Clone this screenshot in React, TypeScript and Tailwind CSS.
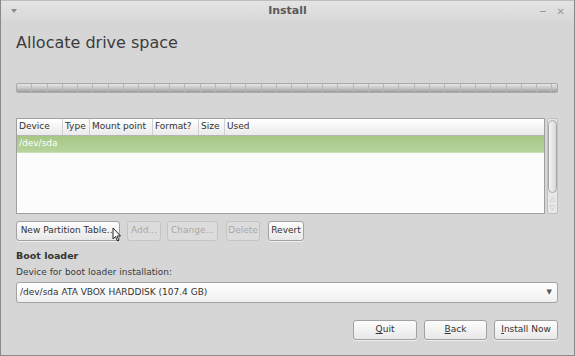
import React from 'react';

const font = { fontFamily: '"DejaVu Sans", sans-serif' };

const columns = [
    { label: 'Device', w: 'w-[46px]' },
    { label: 'Type', w: 'w-[27px]' },
    { label: 'Mount point', w: 'w-[63px]' },
    { label: 'Format?', w: 'w-[46px]' },
    { label: 'Size', w: 'w-[26px]' },
    { label: 'Used', w: 'flex-1' },
];

const ticks = Array.from({ length: 36 });

function Btn({ children, disabled, w }: { children: React.ReactNode; disabled?: boolean; w: string }) {
    return (
        <div
            className={`${w} h-[20px] shrink-0 flex items-center justify-center rounded-[3px] border text-[9px] ${
                disabled
                    ? 'border-[#c4c4c4] bg-[#dcdcdc] text-[#a8a8a8]'
                    : 'border-[#a2a2a2] bg-gradient-to-b from-[#fdfdfd] to-[#e8e8e8] text-[#333] shadow-[0_1px_0_#eee]'
            }`}
        >
            {children}
        </div>
    );
}

export default function App() {
    return (
        <div style={font} className="w-[575px] h-[356px] bg-[#d6d6d6] border-x border-b border-[#8a8a8a] flex flex-col overflow-hidden">
            {/* title bar */}
            <div className="h-[21px] relative flex items-center justify-center bg-gradient-to-b from-[#e4e4e4] to-[#d8d8d8] border-t border-[#bdbdbd]">
                <span className="text-[11px] font-bold text-[#5a5a5a]">Install</span>
                <div className="absolute left-[10px] top-[8px] w-0 h-0 border-l-[3px] border-r-[3px] border-t-[4px] border-l-transparent border-r-transparent border-t-[#8a8a8a]" />
                <div className="absolute right-[28px] top-[10px] w-[6px] h-[1px] bg-[#999]" />
                <span className="absolute right-[9px] top-[3px] text-[10px] text-[#9a9a9a]">✕</span>
            </div>

            <div className="flex flex-col pl-[15px] pr-[16px]">
                <h1 className="mt-[12px] h-[20px] text-[16px] leading-[20px] text-[#3c3c3c]">Allocate drive space</h1>

                {/* partition bar */}
                <div className="mt-[30px] h-[10px] flex rounded-[2px] border border-[#aaa] bg-gradient-to-b from-[#e6e6e6] via-[#c8c8c8] to-[#9e9e9e] overflow-hidden">
                    {ticks.map((_, i) => (
                        <div key={i} className="w-[15.3px] shrink-0 border-r border-[#b8b8b8]" />
                    ))}
                </div>

                {/* partition list */}
                <div className="mt-[25px] h-[96px] flex gap-[2px]">
                    <div className="flex-1 flex flex-col bg-white border border-[#a0a0a0]">
                        <div className="h-[17px] flex text-[9px] text-[#333] bg-gradient-to-b from-white to-[#eaeaea] border-b border-[#b5b5b5]">
                            {columns.map((c) => (
                                <div key={c.label} className={`${c.w} shrink-0 px-[2px] flex items-center border-r border-[#d0d0d0] last:border-r-0`}>
                                    {c.label}
                                </div>
                            ))}
                        </div>
                        <div className="h-[17px] flex items-center px-[2px] text-[9px] text-white bg-gradient-to-b from-[#a7c785] to-[#b6d49c] border-b border-[#c9dfb6]">
                            /dev/sda
                        </div>
                        <div className="flex-1 bg-[#fcfcfc]" />
                    </div>
                    <div className="w-[11px] flex flex-col items-center bg-[#e8e8e8] border border-[#c0c0c0] rounded-[2px]">
                        <div className="w-[9px] h-[73px] mt-[1px] rounded-[5px] border border-[#a8a8a8] bg-gradient-to-r from-[#f4f4f4] to-[#d8d8d8]" />
                        <span className="mt-[2px] text-[7px] leading-[9px] text-[#bbb]">△</span>
                        <span className="text-[7px] leading-[9px] text-[#bbb]">▽</span>
                    </div>
                </div>

                {/* action buttons */}
                <div className="mt-[7px] flex relative">
                    <Btn w="w-[104px]">New Partition Table...</Btn>
                    <div className="ml-[7px]"><Btn w="w-[34px]" disabled>Add...</Btn></div>
                    <div className="ml-[6px]"><Btn w="w-[51px]" disabled>Change...</Btn></div>
                    <div className="ml-[8px]"><Btn w="w-[34px]" disabled>Delete</Btn></div>
                    <div className="ml-[8px]"><Btn w="w-[36px]">Revert</Btn></div>
                    <svg className="absolute left-[96px] top-[6px]" width="10" height="15" viewBox="0 0 10 15">
                        <path d="M1 1 L1 12 L3.5 9.5 L5.5 14 L7 13.3 L5 9 L8.5 9 Z" fill="#fff" stroke="#222" strokeWidth="1" strokeLinejoin="round" />
                    </svg>
                </div>

                <div className="mt-[9px] text-[9.5px] font-bold text-[#333] leading-[12px]">Boot loader</div>
                <div className="mt-[4px] text-[9px] text-[#3a3a3a] leading-[12px]">Device for boot loader installation:</div>

                <div className="mt-[4px] h-[21px] flex items-center justify-between px-[3px] rounded-[3px] border border-[#a2a2a2] bg-gradient-to-b from-white to-[#f0f0f0] text-[9px] text-[#333]">
                    <span>/dev/sda ATA VBOX HARDDISK (107.4 GB)</span>
                    <span className="text-[7px] text-[#555] mr-[2px]">▼</span>
                </div>

                <div className="mt-[17px] flex justify-end gap-[7px]">
                    <Btn w="w-[64px]"><span className="underline">Q</span>uit</Btn>
                    <Btn w="w-[63px]"><span className="underline">B</span>ack</Btn>
                    <Btn w="w-[64px]"><span className="underline">I</span>nstall Now</Btn>
                </div>
            </div>
        </div>
    );
}
